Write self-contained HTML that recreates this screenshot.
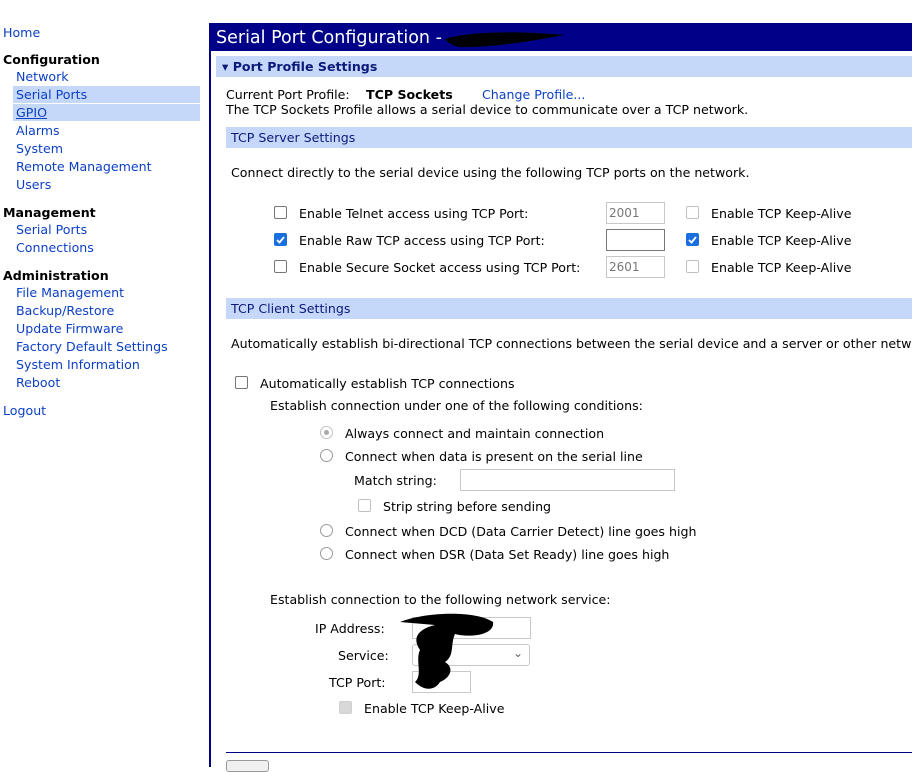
<!DOCTYPE html>
<html><head><meta charset="utf-8"><style>
*{margin:0;padding:0;box-sizing:border-box}
body{width:912px;height:767px;overflow:hidden;background:#fff;font-family:"DejaVu Sans","Liberation Sans",sans-serif;font-size:12.6px;color:#000;position:relative}
.a{position:absolute;white-space:nowrap;line-height:15px}
.l{color:#0b3fc4}
.h{font-weight:bold}
.hl{position:absolute;left:13px;width:187px;height:17px;background:#c6d8fa}
.bar{position:absolute;left:226px;width:686px;height:21px;background:#c6d8fa;color:#0a1a7a}
.cb{position:absolute;width:13px;height:13px;border:1px solid #767676;border-radius:2px;background:#fff}
.cb.on{background:#1a6fe0;border-color:#1a6fe0}
.cb.dis{border-color:#c0c0c0}
.rd{position:absolute;width:13px;height:13px;border:1px solid #9a9a9a;border-radius:50%;background:#fff}
.in{position:absolute;height:22px;border:1px solid #c8c8c8;background:#fff;color:#777;font-size:12px;padding:3px 2px;line-height:14px}
</style></head><body>
<div class="hl" style="top:86px"></div>
<div class="hl" style="top:104px"></div>
<div class="a l" style="left:3px;top:25px">Home</div>
<div class="a h" style="left:3px;top:52px">Configuration</div>
<div class="a l" style="left:16px;top:69px">Network</div>
<div class="a l" style="left:16px;top:87px">Serial Ports</div>
<div class="a l" style="left:16px;top:105px;text-decoration:underline">GPIO</div>
<div class="a l" style="left:16px;top:123px">Alarms</div>
<div class="a l" style="left:16px;top:141px">System</div>
<div class="a l" style="left:16px;top:159px">Remote Management</div>
<div class="a l" style="left:16px;top:177px">Users</div>
<div class="a h" style="left:3px;top:205px">Management</div>
<div class="a l" style="left:16px;top:222px">Serial Ports</div>
<div class="a l" style="left:16px;top:240px">Connections</div>
<div class="a h" style="left:3px;top:268px">Administration</div>
<div class="a l" style="left:16px;top:285px">File Management</div>
<div class="a l" style="left:16px;top:303px">Backup/Restore</div>
<div class="a l" style="left:16px;top:321px">Update Firmware</div>
<div class="a l" style="left:16px;top:339px">Factory Default Settings</div>
<div class="a l" style="left:16px;top:357px">System Information</div>
<div class="a l" style="left:16px;top:375px">Reboot</div>
<div class="a l" style="left:3px;top:403px">Logout</div>

<div style="position:absolute;left:209px;top:23px;width:2px;height:744px;background:#000088"></div>
<div style="position:absolute;left:209px;top:23px;width:703px;height:28px;background:#000088"></div>
<div class="a" style="left:216px;top:27px;color:#fff;font-size:17.5px;line-height:22px">Serial Port Configuration -</div>
<svg style="position:absolute;left:440px;top:27px" width="130" height="24"><path d="M5 12 C30 4 80 4 125 8 C90 14 60 20 20 20 C10 18 8 15 5 12Z" fill="#000"/></svg>

<div class="bar" style="left:216px;width:696px;top:56px"><span class="a h" style="left:6px;top:3px">▾ Port Profile Settings</span></div>
<div class="a" style="left:226px;top:87px">Current Port Profile:</div>
<div class="a h" style="left:366px;top:87px">TCP Sockets</div>
<div class="a l" style="left:482px;top:87px">Change Profile...</div>
<div class="a" style="left:226px;top:102px">The TCP Sockets Profile allows a serial device to communicate over a TCP network.</div>

<div class="bar" style="top:127px"><span class="a" style="left:5px;top:3px">TCP Server Settings</span></div>
<div class="a" style="left:231px;top:165px">Connect directly to the serial device using the following TCP ports on the network.</div>
<div class="cb" style="left:274px;top:206px"></div><div class="a" style="left:299px;top:206px">Enable Telnet access using TCP Port:</div>
<div class="in" style="left:606px;top:202px;width:59px">2001</div>
<div class="cb dis" style="left:686px;top:206px"></div><div class="a" style="left:711px;top:206px">Enable TCP Keep-Alive</div>
<div class="cb on" style="left:274px;top:233px"><svg width="11" height="11" style="position:absolute;left:0;top:0"><path d="M2 6l2.5 2.5L9 3" stroke="#fff" stroke-width="1.8" fill="none"/></svg></div><div class="a" style="left:299px;top:233px">Enable Raw TCP access using TCP Port:</div>
<div class="in" style="left:606px;top:229px;width:59px;border-color:#767676"></div>
<div class="cb on" style="left:686px;top:233px"><svg width="11" height="11" style="position:absolute;left:0;top:0"><path d="M2 6l2.5 2.5L9 3" stroke="#fff" stroke-width="1.8" fill="none"/></svg></div><div class="a" style="left:711px;top:233px">Enable TCP Keep-Alive</div>
<div class="cb" style="left:274px;top:260px"></div><div class="a" style="left:299px;top:260px">Enable Secure Socket access using TCP Port:</div>
<div class="in" style="left:606px;top:256px;width:59px">2601</div>
<div class="cb dis" style="left:686px;top:260px"></div><div class="a" style="left:711px;top:260px">Enable TCP Keep-Alive</div>

<div class="bar" style="top:298px"><span class="a" style="left:5px;top:3px">TCP Client Settings</span></div>
<div class="a" style="left:231px;top:336px">Automatically establish bi-directional TCP connections between the serial device and a server or other network</div>
<div class="cb" style="left:235px;top:376px"></div><div class="a" style="left:260px;top:376px">Automatically establish TCP connections</div>
<div class="a" style="left:270px;top:398px">Establish connection under one of the following conditions:</div>
<div class="rd" style="left:320px;top:426px;border-color:#c0c0c0"><div style="position:absolute;left:3px;top:3px;width:5px;height:5px;border-radius:50%;background:#aaa"></div></div><div class="a" style="left:345px;top:426px">Always connect and maintain connection</div>
<div class="rd" style="left:320px;top:449px"></div><div class="a" style="left:345px;top:449px">Connect when data is present on the serial line</div>
<div class="a" style="left:354px;top:473px">Match string:</div>
<div class="in" style="left:460px;top:469px;width:215px"></div>
<div class="cb dis" style="left:358px;top:499px"></div><div class="a" style="left:383px;top:499px">Strip string before sending</div>
<div class="rd" style="left:320px;top:524px"></div><div class="a" style="left:345px;top:524px">Connect when DCD (Data Carrier Detect) line goes high</div>
<div class="rd" style="left:320px;top:547px"></div><div class="a" style="left:345px;top:547px">Connect when DSR (Data Set Ready) line goes high</div>

<div class="a" style="left:270px;top:592px">Establish connection to the following network service:</div>
<div class="a" style="left:315px;top:621px">IP Address:</div>
<div class="in" style="left:412px;top:617px;width:119px"></div>
<div class="a" style="left:338px;top:648px">Service:</div>
<div class="in" style="left:412px;top:644px;width:118px;border-radius:3px"><span style="position:absolute;right:6px;top:1px;color:#666">⌄</span></div>
<div class="a" style="left:329px;top:675px">TCP Port:</div>
<div class="in" style="left:412px;top:671px;width:59px"></div>
<svg style="position:absolute;left:395px;top:610px" width="105" height="85"><path d="M5 12 C30 2 80 0 98 12 C100 25 75 28 60 24 C55 35 60 45 50 52 C60 58 55 68 45 72 C40 80 30 82 20 72 C28 65 20 50 25 40 C18 30 20 20 40 15 Z" fill="#000"/></svg>
<div class="cb dis" style="left:339px;top:701px;background:#d8d8d8;border-color:#d0d0d0"></div><div class="a" style="left:364px;top:701px">Enable TCP Keep-Alive</div>

<div style="position:absolute;left:226px;top:752px;width:686px;height:1px;background:#000088"></div>
<div style="position:absolute;left:226px;top:760px;width:43px;height:12px;border:1px solid #999;border-radius:3px;background:#f0f0f0"></div>
</body></html>
